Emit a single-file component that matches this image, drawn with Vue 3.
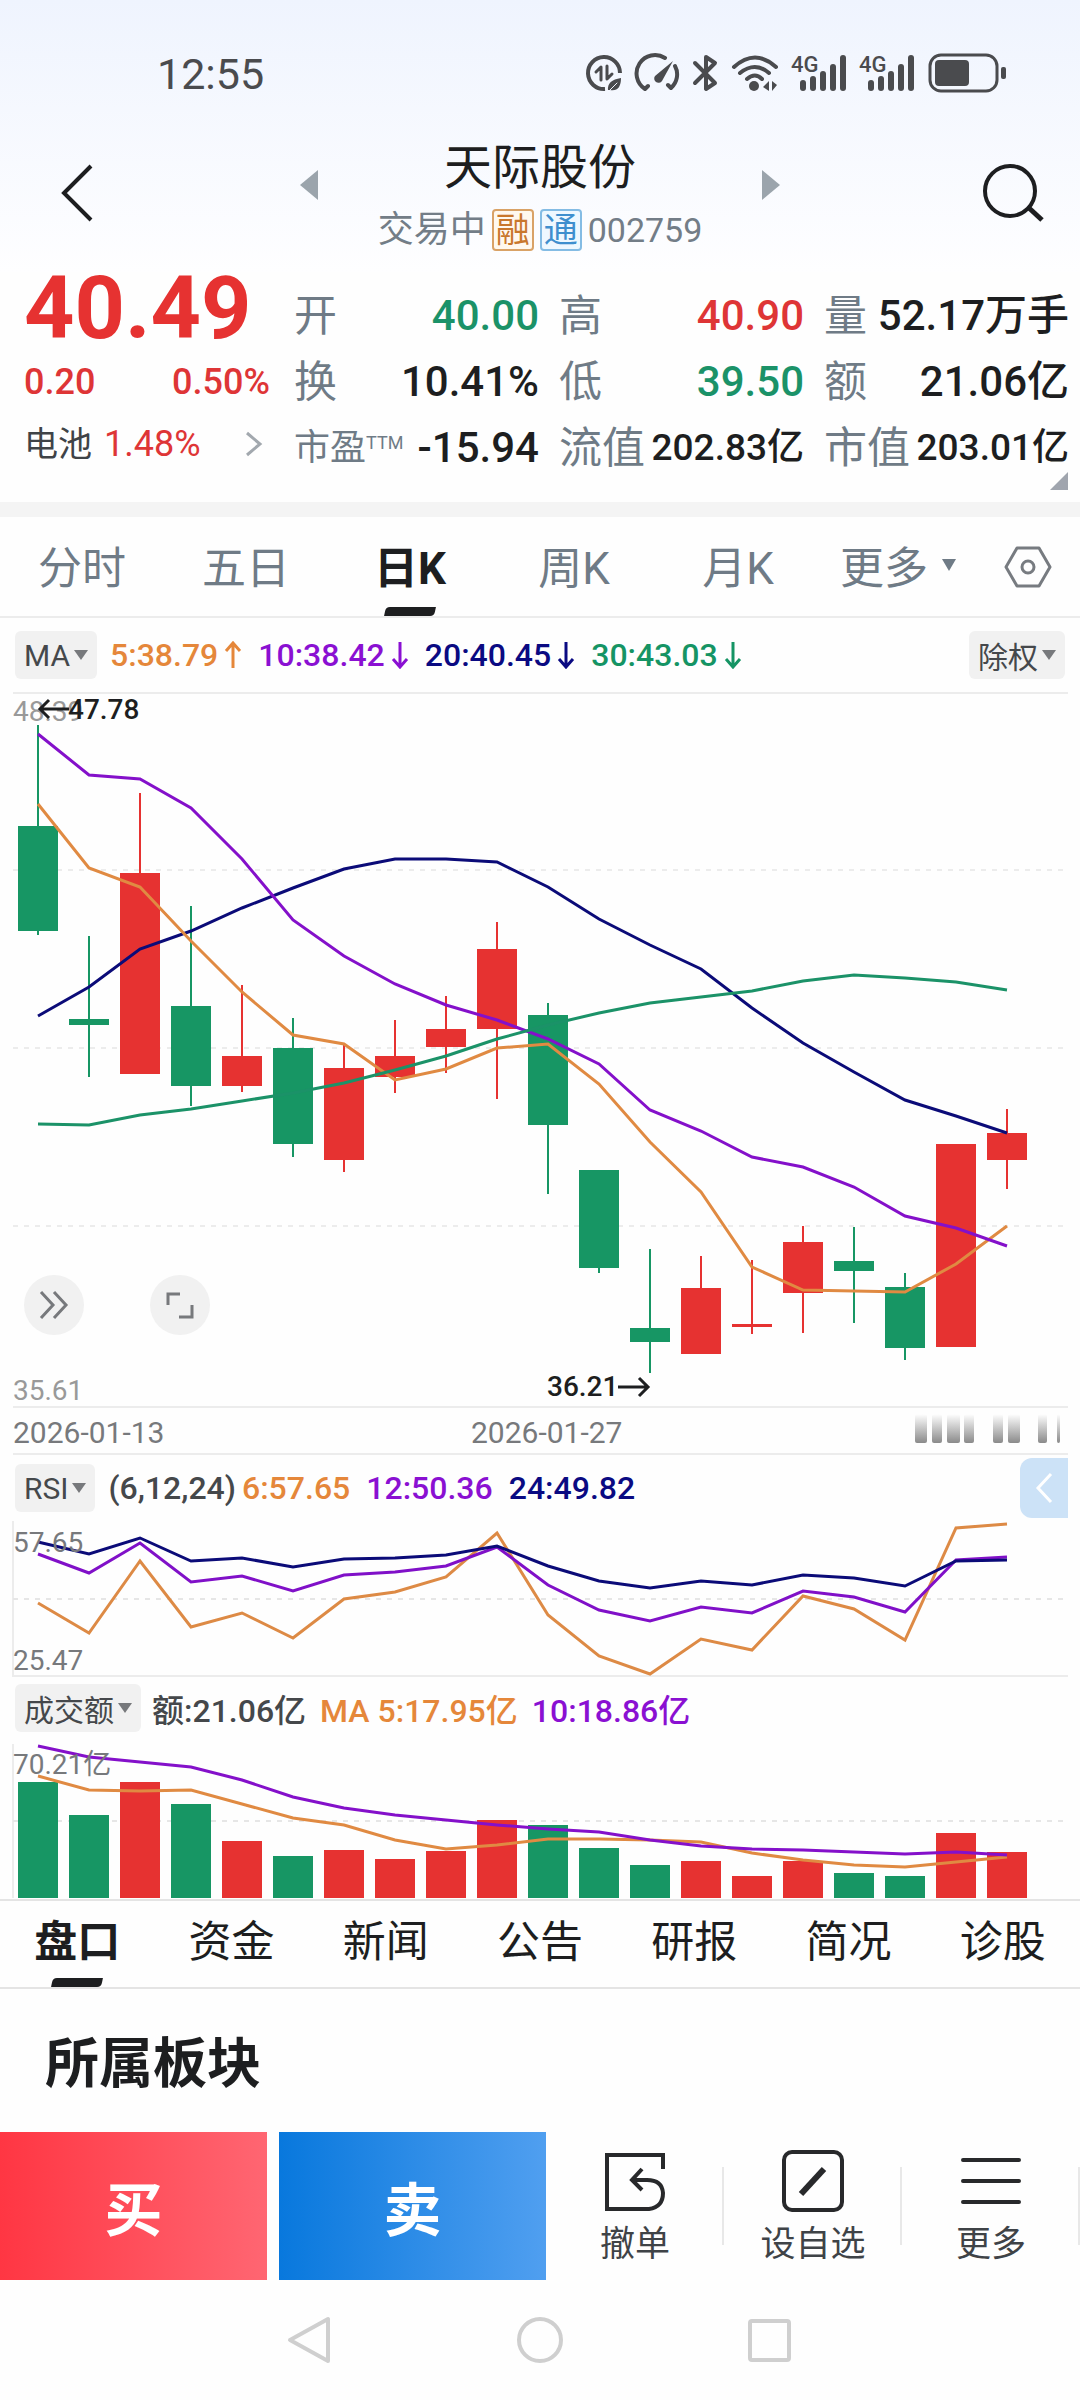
<script setup>
const GREEN = '#179664'
const RED = '#e63231'

const x = (i) => 38 + i * 51
const line = (ys) => ys.map((y, i) => `${x(i)},${y}`).join(' ')

const metrics = [
  { label: '开', value: '40.00', tone: 'down' },
  { label: '高', value: '40.90', tone: 'up' },
  { label: '量', value: '52.17万手' },
  { label: '换', value: '10.41%' },
  { label: '低', value: '39.50', tone: 'down' },
  { label: '额', value: '21.06亿' },
  { label: '市盈', note: 'TTM', value: '-15.94', small: true },
  { label: '流值', value: '202.83亿', long: true },
  { label: '市值', value: '203.01亿', long: true },
]

const periods = ['分时', '五日', '日K', '周K', '月K']
const sections = ['盘口', '资金', '新闻', '公告', '研报', '简况', '诊股']

const averages = [
  { text: '5:38.79', color: '#e5873a', up: true },
  { text: '10:38.42', color: '#8a10d2' },
  { text: '20:40.45', color: '#0a0a82' },
  { text: '30:43.03', color: '#159464' },
]

// up/down flag, high, body top, body bottom, low
const candles = [
  ['g', 725, 826, 931, 935], ['g', 936, 1019, 1025, 1077], ['r', 793, 873, 1074, 1074],
  ['g', 906, 1006, 1086, 1106], ['r', 985, 1056, 1086, 1092], ['g', 1018, 1048, 1144, 1157],
  ['r', 1044, 1068, 1160, 1172], ['r', 1020, 1056, 1077, 1093], ['r', 996, 1029, 1047, 1073],
  ['r', 922, 949, 1029, 1099], ['g', 1003, 1015, 1125, 1194], ['g', 1170, 1170, 1268, 1273],
  ['g', 1249, 1328, 1342, 1373], ['r', 1256, 1288, 1354, 1354], ['r', 1260, 1324, 1327, 1334],
  ['r', 1226, 1242, 1293, 1333], ['g', 1227, 1261, 1271, 1323], ['g', 1273, 1287, 1348, 1360],
  ['r', 1144, 1144, 1347, 1347], ['r', 1109, 1133, 1160, 1189],
].map(([k, high, top, bottom, low], i) => ({
  color: k === 'g' ? GREEN : RED, x: x(i), high, top, bottom, low,
}))

const volumeTops = [1782, 1815, 1782, 1804, 1841, 1856, 1850, 1859, 1851, 1820, 1825, 1848, 1865, 1861, 1876, 1861, 1873, 1876, 1833, 1852]
const volumes = volumeTops.map((top, i) => ({ x: x(i), top, color: candles[i].color }))

const priceLines = [
  { color: '#0b0b78', ys: [1016, 987, 949, 931, 908, 888, 869, 859, 859, 862, 887, 919, 945, 969, 1008, 1043, 1072, 1100, 1116, 1133] },
  { color: '#e08a42', ys: [804, 868, 887, 941, 992, 1035, 1044, 1080, 1069, 1048, 1044, 1084, 1142, 1192, 1267, 1290, 1291, 1292, 1264, 1226] },
  { color: '#8410ca', ys: [734, 775, 779, 808, 859, 920, 956, 984, 1005, 1020, 1039, 1064, 1110, 1131, 1157, 1167, 1187, 1216, 1228, 1246] },
  { color: '#1b9268', ys: [1124, 1125, 1115, 1109, 1101, 1093, 1083, 1070, 1056, 1039, 1025, 1013, 1003, 997, 991, 981, 975, 978, 982, 990] },
]
const rsiLines = [
  { color: '#dd8a45', ys: [1603, 1633, 1561, 1627, 1613, 1638, 1599, 1592, 1577, 1533, 1615, 1656, 1674, 1639, 1650, 1596, 1609, 1640, 1528, 1524] },
  { color: '#8010c8', ys: [1554, 1573, 1543, 1582, 1576, 1591, 1575, 1572, 1566, 1547, 1585, 1610, 1621, 1607, 1613, 1591, 1597, 1612, 1560, 1557] },
  { color: '#0b0b78', ys: [1542, 1554, 1538, 1561, 1558, 1567, 1559, 1558, 1555, 1546, 1566, 1581, 1588, 1581, 1585, 1575, 1578, 1586, 1561, 1560] },
]
const volumeLines = [
  { color: '#e08a42', ys: [1776, 1790, 1791, 1790, 1804, 1818, 1825, 1840, 1849, 1845, 1839, 1839, 1840, 1842, 1853, 1860, 1865, 1867, 1862, 1857] },
  { color: '#8410ca', ys: [1746, 1757, 1762, 1767, 1780, 1797, 1808, 1815, 1820, 1825, 1829, 1832, 1840, 1846, 1849, 1850, 1852, 1854, 1852, 1855] },
]
const fading = [[915, 12], [932, 10], [947, 13], [964, 10], [993, 10], [1008, 12], [1038, 9], [1057, 3]]
const signalBars = [[215, 28], [225, 24], [235, 19], [245, 12], [255, 3]]
</script>

<template>
  <div class="app">
    <div class="top">
      <div class="status">
        <span>12:55</span>
        <svg class="status-icons" viewBox="0 0 424 44" width="424" height="44" fill="none" stroke="#4a4b4e" stroke-width="4" stroke-linecap="round" stroke-linejoin="round" aria-hidden="true">
          <path d="M20 37A16 16 0 1 1 35 21" stroke-linecap="butt" />
          <path d="M11 20L16 15V28M22 14V27L27 22" stroke-width="3" />
          <path d="M23 38Q22 28 36 26Q36 40 25 38Z" fill="#4a4b4e" stroke="none" />
          <path d="M24 39L32 31" stroke="#f4f8ff" stroke-width="1" />
          <path d="M60 37A18 18 0 0 1 80 6M90 14A18 18 0 0 1 86 36M60 37L63 34M86 36L83 33" />
          <path d="M88 9L77 29A4 4 0 1 1 70 24Z" fill="#4a4b4e" stroke="none" />
          <path d="M110 11L130 31L121 37V5L130 11L110 31" />
          <path d="M149 15Q170 -4 191 15M155 21Q170 9 184 21M162 27Q170 20 177 27" />
          <circle cx="169" cy="34" r="5" fill="#4a4b4e" stroke="none" />
          <path d="M178 35L184 29V39M187 29V39L192 33" stroke="none" fill="#4a4b4e" />
          <g v-for="dx in [0, 68]" :key="dx" :transform="`translate(${dx} 0)`" fill="#4a4b4e" stroke="none">
            <text x="206" y="20" font-size="22" font-weight="500">4G</text>
            <rect v-for="[bx, by] in signalBars" :key="bx" :x="bx" :y="by" width="6" :height="39 - by" rx="3" />
          </g>
          <rect x="345" y="3" width="67" height="36" rx="11" stroke-width="3" />
          <rect x="350" y="8" width="34" height="26" rx="4" fill="#4a4b4e" stroke="none" />
          <rect x="416" y="15" width="5" height="12" rx="2" fill="#4a4b4e" stroke="none" />
        </svg>
      </div>

      <header class="header">
        <button class="back" aria-label="返回">
          <svg width="34" height="60" viewBox="0 0 34 60" fill="none" stroke="#1d1e20" stroke-width="4"><path d="M31 3L4 30L31 57" /></svg>
        </button>
        <div class="stock">
          <button class="step" aria-label="上一只"><svg width="18" height="30"><path d="M18 0V30L0 15Z" fill="#9ba4ac" /></svg></button>
          <div class="stock-name">
            <h1>天际股份</h1>
            <p>交易中<i class="tag margin">融</i><i class="tag connect">通</i><span>002759</span></p>
          </div>
          <button class="step" aria-label="下一只"><svg width="18" height="30"><path d="M0 0V30L18 15Z" fill="#9ba4ac" /></svg></button>
        </div>
        <button class="search" aria-label="搜索">
          <svg width="64" height="62" viewBox="0 0 64 62" fill="none" stroke="#1d1e20" stroke-width="4"><circle cx="29" cy="29" r="25" /><path d="M48 46L61 58" stroke-width="5" /></svg>
        </button>
      </header>
    </div>

    <section class="quote">
      <div class="price">
        <strong>40.49</strong>
        <div class="change"><span>0.20</span><span>0.50%</span></div>
        <a class="sector" href="#sector"><span class="sector-name">电池</span><span>1.48%</span>
          <svg width="18" height="26" fill="none" stroke="#a2a8ae" stroke-width="3"><path d="M2 2L15 13L2 24" /></svg></a>
      </div>
      <dl class="metrics">
        <div v-for="m in metrics" :key="m.label">
          <dt :class="{ small: m.small }">{{ m.label }}<sup v-if="m.note">{{ m.note }}</sup></dt>
          <dd :class="[m.tone, { long: m.long }]">{{ m.value }}</dd>
        </div>
      </dl>
      <svg class="corner" width="18" height="18" aria-hidden="true"><path d="M18 0V18H0Z" fill="#a0a5ae" /></svg>
    </section>

    <nav class="periods">
      <button v-for="p in periods" :key="p" :class="{ active: p === '日K' }">{{ p }}</button>
      <button class="more">更多<svg width="14" height="12"><path d="M0 0H14L7 12Z" fill="#6f7b86" /></svg></button>
      <button class="gear" aria-label="设置">
        <svg width="48" height="44" viewBox="0 0 48 44" fill="none" stroke="#777b80" stroke-width="3"><path d="M13 3H35L46 22L35 41H13L2 22Z" stroke-linejoin="round" /><circle cx="24" cy="22" r="6" /></svg>
      </button>
    </nav>

    <div class="legend tall">
      <button class="pick">MA<svg width="14" height="10"><path d="M0 0H14L7 10Z" fill="#77797c" /></svg></button>
      <span v-for="a in averages" :key="a.text" class="average" :style="{ color: a.color }">{{ a.text }}<svg width="18" height="28" fill="none" stroke="currentColor" stroke-width="3"><path :d="a.up ? 'M9 27V2M2 10L9 2L16 10' : 'M9 1V26M2 18L9 26L16 18'" /></svg></span>
      <button class="pick end">除权<svg width="14" height="10"><path d="M0 0H14L7 10Z" fill="#77797c" /></svg></button>
    </div>

    <div class="chart">
      <svg viewBox="0 692 1080 763" role="img" aria-label="日K线">
        <defs>
          <linearGradient id="fade" x1="0" y1="0" x2="0" y2="1">
            <stop offset="0" stop-color="#fff" /><stop offset="1" stop-color="#8a8a8a" />
          </linearGradient>
        </defs>
        <g stroke="#ececec" stroke-width="2">
          <path d="M13 693H1068M13 1407H1068M13 1454H1068" />
          <path d="M13 870H1068M13 1048H1068M13 1226H1068" stroke-dasharray="5 6" />
        </g>
        <text x="13" y="721" class="axis light">48.39</text>
        <text x="13" y="1400" class="axis light">35.61</text>
        <g v-for="c in candles" :key="c.x" :fill="c.color">
          <rect :x="c.x - 1" :y="c.high" width="2" :height="c.low - c.high" />
          <rect :x="c.x - 20" :y="c.top" width="40" :height="c.bottom - c.top" />
        </g>
        <polyline v-for="l in priceLines" :key="l.color" :points="line(l.ys)" fill="none" :stroke="l.color" stroke-width="3" />
        <path d="M69 709H40M49 700L40 709L49 718M618 1387H648M639 1378L648 1387L639 1396" fill="none" stroke="#1d1e20" stroke-width="3" />
        <text x="68" y="719" class="axis mark">47.78</text>
        <text x="547" y="1396" class="axis mark">36.21</text>
        <text x="13" y="1443" class="axis date">2026-01-13</text>
        <text x="471" y="1443" class="axis date">2026-01-27</text>
        <rect v-for="[fx, fw] in fading" :key="fx" :x="fx" y="1414" :width="fw" height="29" rx="2" fill="url(#fade)" />
      </svg>
      <div class="tools">
        <button aria-label="展开"><svg width="32" height="32" fill="none" stroke="#77797c" stroke-width="3"><path d="M3 3L15 16L3 29M16 3L28 16L16 29" /></svg></button>
        <button aria-label="全屏"><svg width="32" height="32" fill="none" stroke="#77797c" stroke-width="3"><path d="M4 16V5H16M28 16V28H15" /></svg></button>
      </div>
    </div>

    <div class="legend rsi">
      <button class="pick">RSI<svg width="14" height="10"><path d="M0 0H14L7 10Z" fill="#77797c" /></svg></button>
      <span class="params">(6,12,24)<span class="orange">6:57.65</span></span>
      <span class="purple">12:50.36</span>
      <span class="navy">24:49.82</span>
      <button class="drawer" aria-label="展开侧栏"><svg width="18" height="32" fill="none" stroke="#fff" stroke-width="3"><path d="M16 2L3 16L16 30" /></svg></button>
    </div>
    <div class="chart">
      <svg viewBox="0 1515 1080 162" role="img" aria-label="RSI">
        <path d="M13 1521V1676H1068" fill="none" stroke="#ececec" stroke-width="2" />
        <path d="M13 1599H1068" stroke="#e6e6e6" stroke-width="2" stroke-dasharray="5 6" />
        <polyline v-for="l in rsiLines" :key="l.color" :points="line(l.ys)" fill="none" :stroke="l.color" stroke-width="3" />
        <text x="13" y="1552" class="axis">57.65</text>
        <text x="13" y="1670" class="axis">25.47</text>
      </svg>
    </div>

    <div class="legend volume">
      <button class="pick">成交额<svg width="14" height="10"><path d="M0 0H14L7 10Z" fill="#77797c" /></svg></button>
      <span class="total">额:21.06亿</span>
      <span class="orange">MA 5:17.95亿</span>
      <span class="purple">10:18.86亿</span>
    </div>
    <div class="chart">
      <svg viewBox="0 1741 1080 158" role="img" aria-label="成交额">
        <path d="M13 1744V1898" stroke="#ececec" stroke-width="2" />
        <path d="M13 1821H1068" stroke="#e6e6e6" stroke-width="2" stroke-dasharray="5 6" />
        <rect v-for="v in volumes" :key="v.x" :x="v.x - 20" :y="v.top" width="40" :height="1898 - v.top" :fill="v.color" />
        <polyline v-for="l in volumeLines" :key="l.color" :points="line(l.ys)" fill="none" :stroke="l.color" stroke-width="3" />
        <text x="13" y="1774" class="axis">70.21亿</text>
      </svg>
    </div>

    <nav class="sections">
      <button v-for="s in sections" :key="s" :class="{ active: s === '盘口' }">{{ s }}</button>
    </nav>
    <h2 class="board">所属板块</h2>

    <div class="trade">
      <button class="buy">买</button>
      <button class="sell">卖</button>
      <div class="actions">
        <button>
          <svg width="64" height="64" fill="none" stroke="#28292b" stroke-width="4"><path d="M60 20V6H4V60H46Q60 58 60 44Q59 31 44 31H29M39 20L29 31L39 41" /></svg>
          撤单
        </button>
        <button>
          <svg width="64" height="64" fill="none" stroke="#28292b" stroke-width="4"><rect x="3" y="3" width="58" height="58" rx="8" /><path d="M20 45L43 20" stroke-width="6" /></svg>
          设自选
        </button>
        <button>
          <svg width="64" height="64" fill="none" stroke="#28292b" stroke-width="4" stroke-linecap="round"><path d="M4 11H60M4 32H60M4 53H60" /></svg>
          更多
        </button>
      </div>
    </div>

    <nav class="system">
      <button aria-label="后退"><svg width="48" height="48" fill="none" stroke="#cfcfcf" stroke-width="4" stroke-linejoin="round"><path d="M42 3V45L4 24Z" /></svg></button>
      <button aria-label="主页"><svg width="48" height="48" fill="none" stroke="#cfcfcf" stroke-width="4"><circle cx="24" cy="24" r="21" /></svg></button>
      <button aria-label="任务"><svg width="48" height="48" fill="none" stroke="#cfcfcf" stroke-width="4"><rect x="4" y="5" width="39" height="39" rx="2" /></svg></button>
    </nav>
  </div>
</template>

<style>
body { margin: 0; background: #fff; }
</style>

<style scoped>
.app { font-family: Roboto, "Noto Sans CJK SC", sans-serif; color: #1d1e20; background: #fefefe; }
button { border: 0; padding: 0; margin: 0; background: none; font: inherit; color: inherit; display: flex; align-items: center; justify-content: center; white-space: nowrap; }
svg { flex: none; display: block; }
h1, h2, p, dl, dd { margin: 0; }
.orange { color: #e5873a; }
.purple { color: #8a10d2; }
.navy { color: #0a0a82; }

.top { background: linear-gradient(#eff4fe, #fefeff); }
.status { display: flex; justify-content: space-between; align-items: center; height: 56px; padding: 46px 71px 0 157px; font-size: 43px; color: #4a4b4e; }

.header { display: grid; grid-template-columns: 140px 1fr 140px; align-items: center; padding: 37px 0 21px; }
.back { margin-left: 60px; padding-bottom: 4px; justify-self: start; }
.search { margin-right: 35px; padding-bottom: 4px; justify-self: end; }
.stock { display: flex; justify-content: center; align-items: center; }
.step { padding-bottom: 20px; }
.stock-name { width: 444px; text-align: center; }
h1 { font-size: 48px; line-height: 58px; font-weight: 400; }
p { display: flex; justify-content: center; align-items: center; margin-top: 12px; height: 42px; font-size: 36px; line-height: 42px; color: #737d87; }
.tag { font-style: normal; font-size: 34px; line-height: 38px; width: 38px; text-align: center; border: 2px solid; border-radius: 4px; margin-left: 6px; }
.tag.margin { color: #c9772c; background: #fff8ee; border-color: #d9a266; }
.tag.connect { color: #3e8fce; background: #eef8ff; border-color: #84bce4; }
p span { margin-left: 6px; font-size: 34px; }

.quote { position: relative; display: flex; gap: 24px; padding: 0 11px 21px 24px; border-bottom: 15px solid #f4f4f4; }
.price { width: 246px; color: #de3536; font-size: 36px; font-weight: 500; }
.price strong { display: block; font-size: 88px; line-height: 72px; font-weight: 700; color: #e63231; }
.change { display: flex; justify-content: space-between; line-height: 66px; margin-top: 5px; }
.sector { display: flex; align-items: center; line-height: 58px; font-weight: 400; color: inherit; text-decoration: none; gap: 12px; }
.sector svg { margin-left: auto; margin-right: 7px; }
.sector-name { font-size: 34px; color: #3f4347; }
.metrics { flex: 1; display: grid; grid-template-columns: repeat(3, 1fr); column-gap: 20px; padding-top: 11px; }
.metrics div { display: flex; justify-content: space-between; line-height: 66px; white-space: nowrap; }
dt { font-size: 43px; color: #6f7b86; display: flex; }
dt.small { font-size: 36px; }
sup { font-size: 18px; line-height: 56px; }
dd { font-size: 42px; font-weight: 500; }
dd.long { font-size: 37px; }
.up { color: #de3536; }
.down { color: #1b9268; }
.corner { position: absolute; right: 12px; bottom: 12px; }

.periods { display: flex; height: 99px; border-bottom: 2px solid #ececec; font-size: 44px; color: #6f7b86; }
.periods button, .sections button { position: relative; flex: 164; min-width: 0; padding-bottom: 4px; }
.periods .more { flex: 156; gap: 14px; }
.periods .gear { flex: 104; padding-bottom: 0; }
.active { color: #1d1e20; font-weight: 700; }
.active::after { content: ""; position: absolute; bottom: 0; left: 50%; width: 50px; height: 9px; margin-left: -25px; background: #1d1e20; border-radius: 4px 0 4px 0; transform: skewX(-12deg); }

.legend { position: relative; display: flex; align-items: center; box-sizing: border-box; font-size: 32px; font-weight: 500; padding-left: 15px; white-space: nowrap; gap: 16px; }
.legend.tall { height: 74px; }
.legend.rsi { height: 60px; padding-top: 6px; }
.legend.volume { height: 64px; padding-bottom: 2px; gap: 14px; }
.pick { height: 48px; padding: 0 9px; gap: 4px; border-radius: 6px; background: #f1f1f1; color: #45484b; font-size: 30px; font-weight: 400; margin-right: -3px; }
.pick.end { margin-left: auto; margin-right: 15px; }
.average { display: flex; align-items: center; gap: 6px; }
.params { color: #45484b; display: flex; gap: 6px; }
.total { color: #45484b; }
.drawer { position: absolute; right: 12px; top: 3px; width: 48px; height: 60px; background: #cce2f7; border-radius: 12px 0 0 12px; z-index: 1; }

.chart { position: relative; }
.chart > svg { width: 100%; height: auto; }
.axis { font-size: 28px; fill: #77797c; }
.axis.light { fill: #999; }
.axis.mark { fill: #1d1e20; font-weight: 500; }
.axis.date { font-size: 30px; }
.tools { position: absolute; left: 24px; bottom: 120px; display: flex; gap: 66px; }
.tools button { width: 60px; height: 60px; border-radius: 50%; background: #f1f1f1; }

.sections { display: flex; height: 86px; border-top: 2px solid #e4e4e4; border-bottom: 2px solid #e4e4e4; font-size: 43px; }
.sections button { padding-bottom: 12px; }
.board { font-size: 54px; line-height: 62px; font-weight: 700; padding: 45px 0 36px 45px; }

.trade { display: flex; height: 148px; }
.buy, .sell { flex: 267; color: #fff; font-size: 58px; font-weight: 700; }
.buy { background: linear-gradient(90deg, #ff3643, #ff6672); margin-right: 12px; }
.sell { background: linear-gradient(90deg, #0878dd, #509ff0); }
.actions { flex: 534; display: flex; align-items: center; }
.actions button { flex: 1; flex-direction: column; gap: 10px; height: 148px; padding-top: 4px; font-size: 35px; line-height: 44px; color: #3f4347; background: linear-gradient(#e8e8e8, #e8e8e8) right center / 2px 78px no-repeat; }
.system { display: flex; justify-content: center; gap: 182px; height: 120px; }
</style>
